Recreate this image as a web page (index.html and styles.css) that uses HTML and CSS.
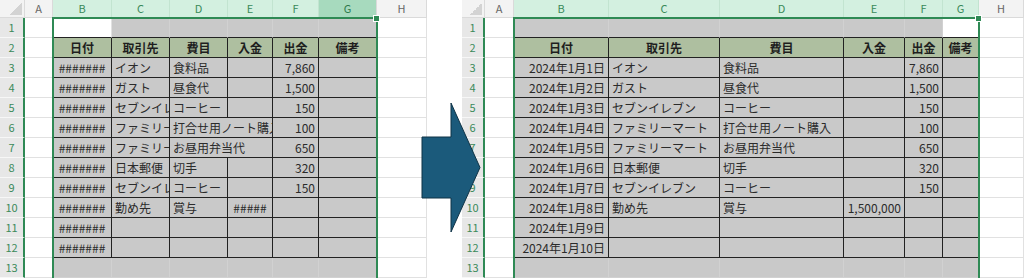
FILE: index.html
```html
<!DOCTYPE html>
<html lang="ja">
<head>
<meta charset="utf-8">
<title>Excel</title>
<link rel="stylesheet" href="styles.css">
</head>
<body>
<div class="page">
  <div class="sheet left">
    <div class="cells">
      <div class="corner"></div><div class="ch">A</div><div class="ch sel">B</div><div class="ch sel">C</div><div class="ch sel">D</div><div class="ch sel">E</div><div class="ch sel">F</div><div class="ch act">G</div><div class="ch">H</div>
      <div class="rh">1</div><div></div><div class="bb"></div><div class="g bb"></div><div class="g bb"></div><div class="g bb"></div><div class="g bb"></div><div class="g bb"></div><div></div>
      <div class="rh">2</div><div></div><div class="th">日付</div><div class="th">取引先</div><div class="th">費目</div><div class="th">入金</div><div class="th">出金</div><div class="th">備考</div><div></div>
      <div class="rh">3</div><div></div><div class="t ctr">#######</div><div class="t">イオン</div><div class="t">食料品</div><div class="t"></div><div class="t r">7,860</div><div class="t"></div><div></div>
      <div class="rh">4</div><div></div><div class="t ctr">#######</div><div class="t">ガスト</div><div class="t">昼食代</div><div class="t"></div><div class="t r">1,500</div><div class="t"></div><div></div>
      <div class="rh">5</div><div></div><div class="t ctr">#######</div><div class="t">セブンイレブン</div><div class="t">コーヒー</div><div class="t"></div><div class="t r">150</div><div class="t"></div><div></div>
      <div class="rh">6</div><div></div><div class="t ctr">#######</div><div class="t">ファミリーマート</div><div class="t sp2">打合せ用ノート購入</div><div class="t r">100</div><div class="t"></div><div></div>
      <div class="rh">7</div><div></div><div class="t ctr">#######</div><div class="t">ファミリーマート</div><div class="t sp2">お昼用弁当代</div><div class="t r">650</div><div class="t"></div><div></div>
      <div class="rh">8</div><div></div><div class="t ctr">#######</div><div class="t">日本郵便</div><div class="t">切手</div><div class="t"></div><div class="t r">320</div><div class="t"></div><div></div>
      <div class="rh">9</div><div></div><div class="t ctr">#######</div><div class="t">セブンイレブン</div><div class="t">コーヒー</div><div class="t"></div><div class="t r">150</div><div class="t"></div><div></div>
      <div class="rh">10</div><div></div><div class="t ctr">#######</div><div class="t">勤め先</div><div class="t">賞与</div><div class="t ctr">#####</div><div class="t"></div><div class="t"></div><div></div>
      <div class="rh">11</div><div></div><div class="t ctr">#######</div><div class="t"></div><div class="t"></div><div class="t"></div><div class="t"></div><div class="t"></div><div></div>
      <div class="rh">12</div><div></div><div class="t ctr">#######</div><div class="t"></div><div class="t"></div><div class="t"></div><div class="t"></div><div class="t"></div><div></div>
      <div class="rh">13</div><div></div><div class="g"></div><div class="g"></div><div class="g"></div><div class="g"></div><div class="g"></div><div class="g"></div><div></div>
    </div>
    <div class="overlay"><div class="selbox"></div></div>
  </div>

  <div class="sheet right">
    <div class="cells">
      <div class="corner"></div><div class="ch">A</div><div class="ch sel">B</div><div class="ch sel">C</div><div class="ch sel">D</div><div class="ch sel">E</div><div class="ch sel">F</div><div class="ch sel">G</div><div class="ch">H</div>
      <div class="rh">1</div><div></div><div class="g bb"></div><div class="g bb"></div><div class="g bb"></div><div class="g bb"></div><div class="g bb"></div><div class="bb"></div><div></div>
      <div class="rh">2</div><div></div><div class="th">日付</div><div class="th">取引先</div><div class="th">費目</div><div class="th">入金</div><div class="th">出金</div><div class="th">備考</div><div></div>
      <div class="rh">3</div><div></div><div class="t r">2024年1月1日</div><div class="t">イオン</div><div class="t">食料品</div><div class="t"></div><div class="t r">7,860</div><div class="t"></div><div></div>
      <div class="rh">4</div><div></div><div class="t r">2024年1月2日</div><div class="t">ガスト</div><div class="t">昼食代</div><div class="t"></div><div class="t r">1,500</div><div class="t"></div><div></div>
      <div class="rh">5</div><div></div><div class="t r">2024年1月3日</div><div class="t">セブンイレブン</div><div class="t">コーヒー</div><div class="t"></div><div class="t r">150</div><div class="t"></div><div></div>
      <div class="rh">6</div><div></div><div class="t r">2024年1月4日</div><div class="t">ファミリーマート</div><div class="t">打合せ用ノート購入</div><div class="t"></div><div class="t r">100</div><div class="t"></div><div></div>
      <div class="rh">7</div><div></div><div class="t r">2024年1月5日</div><div class="t">ファミリーマート</div><div class="t">お昼用弁当代</div><div class="t"></div><div class="t r">650</div><div class="t"></div><div></div>
      <div class="rh">8</div><div></div><div class="t r">2024年1月6日</div><div class="t">日本郵便</div><div class="t">切手</div><div class="t"></div><div class="t r">320</div><div class="t"></div><div></div>
      <div class="rh">9</div><div></div><div class="t r">2024年1月7日</div><div class="t">セブンイレブン</div><div class="t">コーヒー</div><div class="t"></div><div class="t r">150</div><div class="t"></div><div></div>
      <div class="rh">10</div><div></div><div class="t r">2024年1月8日</div><div class="t">勤め先</div><div class="t">賞与</div><div class="t r">1,500,000</div><div class="t"></div><div class="t"></div><div></div>
      <div class="rh">11</div><div></div><div class="t r">2024年1月9日</div><div class="t"></div><div class="t"></div><div class="t"></div><div class="t"></div><div class="t"></div><div></div>
      <div class="rh">12</div><div></div><div class="t r">2024年1月10日</div><div class="t"></div><div class="t"></div><div class="t"></div><div class="t"></div><div class="t"></div><div></div>
      <div class="rh">13</div><div></div><div class="g"></div><div class="g"></div><div class="g"></div><div class="g"></div><div class="g"></div><div class="g"></div><div></div>
    </div>
    <div class="overlay"><div class="selbox"></div></div>
  </div>

  <svg class="arrow" width="62" height="133" viewBox="0 0 62 133" aria-hidden="true">
    <polygon points="1,35 30,35 30,1 59,65.5 30,130 30,96 1,96" fill="#1b5a7b" stroke="#0f3346" stroke-width="1"/>
  </svg>
</div>
</body>
</html>
```

FILE: styles.css
```css
html, body {
  margin: 0;
  padding: 0;
  background: #ffffff;
}

body {
  font-family: "Noto Sans CJK JP", "Noto Sans", sans-serif;
}

.page {
  position: relative;
  display: flex;
  gap: 35px;
  width: 1024px;
  height: 278px;
  overflow: hidden;
}

.sheet {
  display: grid;
  overflow: hidden;
  height: 278px;
}

.left {
  --cols: 25px 28px 59px 58px 58px 45px 46px 58px 50px;
}

.right {
  --cols: 23px 29px 95px 111px 124px 61px 38px 36px 45px;
}

.cells,
.overlay {
  grid-area: 1 / 1;
  display: grid;
  grid-template-columns: var(--cols);
  grid-template-rows: 18px repeat(13, 20px);
}

.overlay {
  pointer-events: none;
  z-index: 2;
}

.cells > div {
  box-sizing: border-box;
  border-right: 1px solid #e1e1e1;
  border-bottom: 1px solid #e1e1e1;
  font-size: 12px;
  line-height: 19px;
  white-space: nowrap;
  overflow: hidden;
  padding: 0 3px;
  color: #2b2b2b;
  background: #ffffff;
}

.cells > .corner {
  background:
    linear-gradient(to bottom right, transparent 50%, #d3d3d3 50%) right 2px bottom 2px / 12px 12px no-repeat,
    #f3f3f3;
  border-right-color: #dadada;
  border-bottom-color: #dadada;
}

.cells > .ch {
  background: #f3f3f3;
  color: #666666;
  font-size: 11px;
  line-height: 17px;
  text-align: center;
  border-right-color: #dadada;
  border-bottom-color: #dadada;
}

.cells > .ch.sel {
  background: #d3f0e0;
  color: #3a8a5a;
  border-right-color: #c2e4d0;
}

.cells > .ch.act {
  background: #a7dabe;
  color: #2e7a4c;
}

.cells > .rh {
  background: #e7e7e7;
  color: #3a8a5a;
  font-size: 11px;
  text-align: center;
  padding: 0;
  border-right: 2px solid #2f8a55;
  border-bottom-color: #f7f7f7;
}

.cells > .g {
  background: #c9c9c9;
  border-right-color: #d1d1d1;
  border-bottom-color: #d1d1d1;
}

.cells > .bb {
  border-bottom-color: #222222;
}

.cells > .th {
  background: #aebfa0;
  font-weight: bold;
  text-align: center;
  color: #1e1e1e;
  border-right-color: #222222;
  border-bottom-color: #222222;
}

.cells > .t {
  background: #c9c9c9;
  border-right-color: #222222;
  border-bottom-color: #222222;
}

.cells > .r {
  text-align: right;
}

.cells > .ctr {
  text-align: center;
  padding: 0;
}

.cells > .sp2 {
  grid-column: span 2;
}

.selbox {
  grid-column: 3 / 9;
  grid-row: 2 / 15;
  margin: -1px -1px 0 -1px;
  border: 2px solid #2f8a55;
  border-bottom: none;
  position: relative;
}

.selbox::after {
  content: "";
  position: absolute;
  right: -4px;
  top: -4px;
  width: 5px;
  height: 5px;
  background: #2f8a55;
  border: 1px solid #ffffff;
}

.arrow {
  position: absolute;
  left: 421px;
  top: 102px;
}
```
